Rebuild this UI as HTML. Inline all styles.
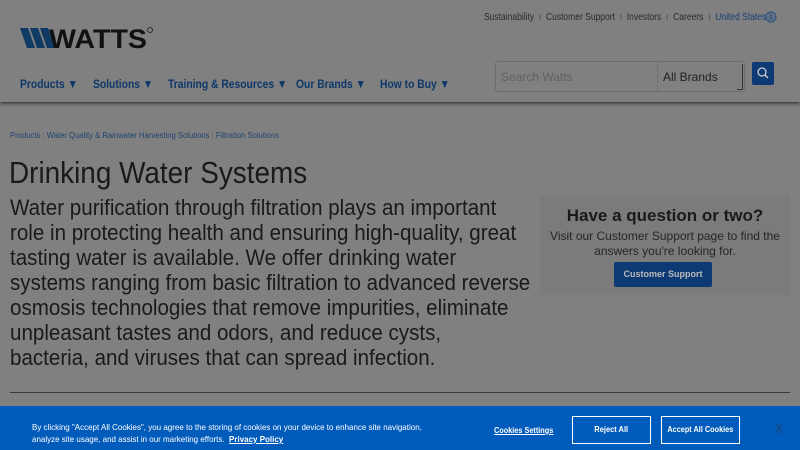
<!DOCTYPE html>
<html><head><meta charset="utf-8"><style>
body{margin:0;width:800px;height:450px;overflow:hidden;background:#808080;font-family:"Liberation Sans",sans-serif;position:relative}
.a{position:absolute;white-space:nowrap}
.s{transform-origin:left top}
.top{font-size:10.5px;color:#2a2a2a;top:11px;transform:scaleX(.81);transform-origin:left}
.nav{font-size:12px;font-weight:bold;color:#0e3769;top:77px;transform:scaleX(.86);transform-origin:left}
.hdr{position:absolute;left:0;top:0;width:800px;height:102px;background:#808080;box-shadow:0 2px 3px rgba(0,0,0,.5)}
.body{font-size:22px;color:#1a1a1a;line-height:25px;left:10px;top:195px;transform:scaleX(.935);transform-origin:left top}
.btn{border:1.5px solid #fff;color:#fff;font-size:8.5px;font-weight:bold;text-align:center;box-sizing:border-box}
</style></head><body>
<div class="hdr"></div>
<svg class="a" style="left:20px;top:26px" width="134" height="24" viewBox="0 0 134 24">
<polygon points="0,2 8,2 15,22 7,22" fill="#0f3a63"/><polygon points="10,2 18,2 25,22 17,22" fill="#0f3a63"/><polygon points="20,2 28,2 35,22 27,22" fill="#0f3a63"/>
<text x="29" y="22" font-family="Liberation Sans" font-weight="bold" font-size="27" fill="#111" textLength="98" lengthAdjust="spacingAndGlyphs">WATTS</text>
<circle cx="130" cy="4" r="2.5" fill="none" stroke="#111" stroke-width=".7"/></svg>
<div class="a top" style="left:484px">Sustainability <span style="color:#444">&nbsp;ı&nbsp;</span> Customer Support <span style="color:#444">&nbsp;ı&nbsp;</span> Investors <span style="color:#444">&nbsp;ı&nbsp;</span> Careers <span style="color:#444">&nbsp;ı&nbsp;</span> <span style="color:#123e73">United States</span></div>
<svg class="a" style="left:765px;top:11px" width="12" height="12"><circle cx="6" cy="6" r="5" fill="none" stroke="#1f4f85"/><path d="M1 6h10M6 1v10M3 3q3 3 6 0M3 9q3-3 6 0" stroke="#1f4f85" fill="none" stroke-width=".7"/></svg>
<div class="a nav" style="left:20px">Products ▼</div>
<div class="a nav" style="left:93px">Solutions ▼</div>
<div class="a nav" style="left:168px">Training &amp; Resources ▼</div>
<div class="a nav" style="left:296px">Our Brands ▼</div>
<div class="a nav" style="left:380px">How to Buy ▼</div>
<div class="a" style="left:495px;top:61px;width:250px;height:31px;border:1px solid #6c6c6c;border-radius:3px;box-sizing:border-box"></div>
<div class="a" style="left:657px;top:62px;width:1px;height:29px;background:#727272"></div>
<div class="a" style="left:501px;top:70px;font-size:12px;color:#606060">Search Watts</div>
<div class="a" style="left:663px;top:70px;font-size:12px;color:#222">All Brands</div>
<div class="a" style="left:737px;top:64px;width:5px;height:25px;border-right:1.5px solid #333;border-bottom:1.5px solid #333"></div>
<div class="a" style="left:752px;top:62px;width:22px;height:23px;background:#0d3a74;border-radius:2px"></div>
<svg class="a" style="left:756px;top:66px" width="14" height="14"><circle cx="6" cy="6" r="4" fill="none" stroke="#ccc" stroke-width="1.3"/><path d="M9 9l3 3" stroke="#ccc" stroke-width="1.5"/></svg>
<div class="a s" style="left:10px;top:131px;font-size:8px;color:#1e4470;transform:scaleX(.96)">Products : Water Quality &amp; Rainwater Harvesting Solutions : Filtration Solutions</div>
<div class="a s" style="left:9px;top:155px;font-size:31px;color:#1a1a1a;transform:scaleX(.9)">Drinking Water Systems</div>
<div class="a body">Water purification through filtration plays an important<br>role in protecting health and ensuring high-quality, great<br>tasting water is available. We offer drinking water<br>systems ranging from basic filtration to advanced reverse<br>osmosis technologies that remove impurities, eliminate<br>unpleasant tastes and odors, and reduce cysts,<br>bacteria, and viruses that can spread infection.</div>
<div class="a" style="left:540px;top:195px;width:250px;height:100px;background:#7b7b7b"></div>
<div class="a" style="left:540px;width:250px;text-align:center;top:206px;font-size:17px;font-weight:bold;color:#1a1a1a">Have a question or two?</div>
<div class="a" style="left:540px;width:250px;text-align:center;top:229px;font-size:12px;line-height:15px;color:#252525;white-space:normal">Visit our Customer Support page to find the answers you're looking for.</div>
<div class="a" style="left:614px;top:262px;width:98px;height:25px;background:#0d3a74;border-radius:2px;color:#bbb;font-size:9px;font-weight:bold;text-align:center;line-height:25px">Customer Support</div>
<div class="a" style="left:10px;top:392px;width:780px;height:1px;background:#3a3a3a"></div>
<div class="a" style="left:0;top:406px;width:800px;height:44px;background:#005bbb"></div>
<div class="a s" style="left:32px;top:421px;font-size:8.5px;line-height:12px;color:#fff;transform:scaleX(.94)">By clicking "Accept All Cookies", you agree to the storing of cookies on your device to enhance site navigation,<br>analyze site usage, and assist in our marketing efforts. &nbsp;<b style="text-decoration:underline">Privacy Policy</b></div>
<div class="a s" style="left:494px;top:425px;font-size:8.5px;font-weight:bold;color:#fff;text-decoration:underline;transform:scaleX(.86)">Cookies Settings</div>
<div class="a btn" style="left:572px;top:416px;width:79px;height:28px;line-height:25px"><span style="display:inline-block;transform:scaleX(.88)">Reject All</span></div>
<div class="a btn" style="left:661px;top:416px;width:79px;height:28px;line-height:25px"><span style="display:inline-block;transform:scaleX(.86)">Accept All Cookies</span></div>
<div class="a" style="left:775px;top:422px;font-size:12px;color:#1a3f6a">X</div>
</body></html>
